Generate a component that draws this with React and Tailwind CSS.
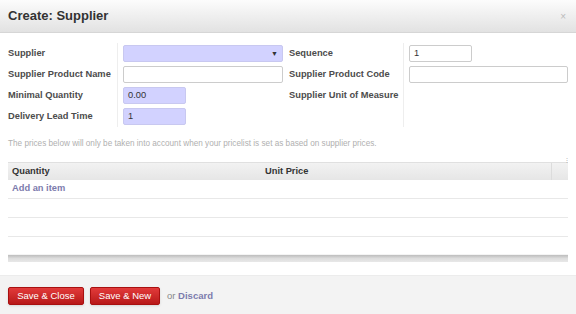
import { useState } from 'react';

const Label = ({ children }) => (
    <div className="flex items-center h-[21px] font-bold text-[#4c4c4c] text-[9.3px] whitespace-nowrap">{children}</div>
);

const Cell = ({ children, sep }) => (
    <div className={`flex items-center h-[21px] ${sep ? 'border-l border-[#eeeeee] pl-[5px]' : 'pl-[6px]'}`}>{children}</div>
);

const Input = ({ value, required, width, select }) => (
    <div
        className={`relative h-[17px] flex items-center px-[4px] text-[9.3px] text-[#333] border rounded-[2px] ${
            required ? 'bg-[#d2d2ff] border-[#c8c8f0]' : 'bg-white border-[#cccccc]'
        } ${width}`}
    >
        {value}
        {select && <span className="absolute right-[4px] top-[3px] text-[7px] text-[#333]">▼</span>}
    </div>
);

export default function App() {
    const [rows] = useState([0, 1, 2]);

    return (
        <div className="w-[576px] h-[314px] bg-white flex flex-col overflow-hidden" style={{ fontFamily: '"Liberation Sans", Arial, sans-serif' }}>
            <div className="h-[33px] shrink-0 flex items-center justify-between px-[8px] bg-gradient-to-b from-[#fcfcfc] to-[#e2e2e2] border-b border-[#d6d6d6]">
                <h1 className="text-[13px] font-bold text-[#333]">Create: Supplier</h1>
                <span className="text-[10px] text-[#bbbbbb] mr-[2px]">×</span>
            </div>

            <div className="flex-1 px-[8px] pt-[9px]">
                <div className="grid grid-cols-[109px_166px_120px_165px] py-[1px]">
                    <Label>Supplier</Label>
                    <Cell sep><Input required width="w-[160px]" select /></Cell>
                    <Cell><Label>Sequence</Label></Cell>
                    <Cell sep><Input value="1" width="w-[63px]" /></Cell>

                    <Label>Supplier Product Name</Label>
                    <Cell sep><Input width="w-[160px]" /></Cell>
                    <Cell><Label>Supplier Product Code</Label></Cell>
                    <Cell sep><Input width="w-[160px]" /></Cell>

                    <Label>Minimal Quantity</Label>
                    <Cell sep><Input required value="0.00" width="w-[63px]" /></Cell>
                    <Cell><Label>Supplier Unit of Measure</Label></Cell>
                    <Cell sep />

                    <Label>Delivery Lead Time</Label>
                    <Cell sep><Input required value="1" width="w-[63px]" /></Cell>
                    <Cell />
                    <Cell sep />
                </div>

                <p className="mt-[10px] text-[8.2px] text-[#b0b0b0]">
                    The prices below will only be taken into account when your pricelist is set as based on supplier prices.
                </p>

                <div className="relative mt-[12px]">
                    <span className="absolute right-[-2px] top-[-5px] text-[6px] leading-none text-[#aaa]">⋮</span>
                    <div className="flex h-[18px] items-center bg-gradient-to-b from-[#f2f2f2] to-[#e6e6e6] border-t border-[#e0e0e0] text-[9.3px] font-bold text-[#333]">
                        <div className="w-[257px] pl-[4px]">Quantity</div>
                        <div className="flex-1">Unit Price</div>
                        <div className="w-[17px] h-full border-l border-[#dcdcdc]" />
                    </div>
                    <div className="h-[19px] flex items-center pl-[4px] border-b border-[#e8e8e8] text-[9.3px] font-bold text-[#7c7bad]">
                        Add an item
                    </div>
                    {rows.map((r) => (
                        <div key={r} className={r < 2 ? 'h-[19px] border-b border-[#e8e8e8]' : 'h-[18px] border-b border-[#f4f4f4]'} />
                    ))}
                    <div className="h-[7px] bg-gradient-to-b from-[#bdbdbd] via-[#dddddd] to-[#e8e8e8]" />
                </div>
            </div>

            <div className="h-[39px] shrink-0 flex items-center gap-[6px] px-[8px] pt-[2px] bg-[#f3f3f3] border-t border-[#ececec]">
                <button className="h-[18px] w-[76px] rounded-[2px] bg-gradient-to-b from-[#e23a3a] to-[#b81818] border border-[#a81010] text-white text-[9.5px] shadow-sm">
                    Save &amp; Close
                </button>
                <button className="h-[18px] w-[70px] rounded-[2px] bg-gradient-to-b from-[#e23a3a] to-[#b81818] border border-[#a81010] text-white text-[9.5px] shadow-sm">
                    Save &amp; New
                </button>
                <span className="text-[9.5px] text-[#888] ml-[1px]">
                    or <a className="font-bold text-[#7c7bad]">Discard</a>
                </span>
            </div>
        </div>
    );
}
